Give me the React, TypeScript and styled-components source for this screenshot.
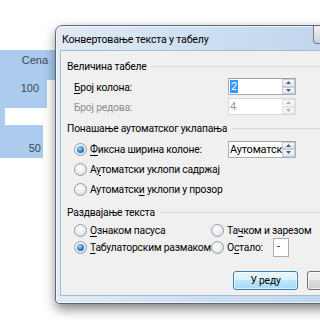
import styled, { createGlobalStyle } from 'styled-components'

const GlobalStyle = createGlobalStyle`
  html, body {
    margin: 0;
    padding: 0;
    width: 320px;
    height: 320px;
    overflow: hidden;
    background: #fff;
  }
  body {
    font-family: Roboto, "Noto Sans", sans-serif;
  }
`

const Page = styled.div`
  position: relative;
  width: 320px;
  height: 320px;
  overflow: hidden;
  background: #fff;
`

/* document behind the dialog */
const Document = styled.div`
  display: flex;
  flex-direction: column;
  padding-top: 50px;
  width: 60px;
  font-family: "Liberation Sans", Arial, sans-serif;
  font-size: 11px;
  color: #3d4650;
`

const DocRow = styled.div<{ $width: number; $height: number }>`
  display: flex;
  justify-content: flex-end;
  align-items: center;
  box-sizing: border-box;
  width: ${({ $width }) => $width}px;
  height: ${({ $height }) => $height}px;
  background: #abcbef;
`

const DocText = styled.span<{ $right: number; $dy?: number }>`
  padding-right: ${({ $right }) => $right}px;
  margin-top: ${({ $dy }) => $dy || 0}px;
`

/* dialog window */
const Window = styled.div`
  position: absolute;
  left: 55px;
  top: 25px;
  width: 331px;
  box-sizing: border-box;
  display: flex;
  flex-direction: column;
  padding: 0 4px 7px 4px;
  border: 1px solid #5b6878;
  border-radius: 7px 7px 4px 4px;
  background: linear-gradient(to right, #e1ebf6 0%, #cfe0f2 40%, #bad2ec 100%);
  box-shadow: 1px 5px 12px rgba(0, 0, 0, 0.5), inset 0 0 0 1px rgba(255, 255, 255, 0.6);
  font-size: 10.3px;
  letter-spacing: -0.2px;
`

const TitleBar = styled.div`
  position: relative;
  height: 24px;
  display: flex;
  align-items: center;
  box-sizing: border-box;
  padding: 3px 0 0 2px;
  font-size: 10.6px;
  color: #000;
`

const CloseButton = styled.div`
  position: absolute;
  left: 253px;
  top: 0;
  width: 43px;
  height: 18px;
  box-sizing: border-box;
  border: 1px solid #6f7d8d;
  border-top: none;
  border-radius: 0 0 4px 4px;
  background: linear-gradient(#edf1f6, #c9d3de);
`

const Client = styled.div`
  display: flex;
  flex-direction: column;
  padding: 5px 7px 5px 6px;
  border: 1px solid #a7bbd2;
  background: #f0f0f0;
  color: #000;
`

const Header = styled.div<{ $top?: number }>`
  display: flex;
  align-items: center;
  gap: 5px;
  height: 20px;
  margin-top: ${({ $top }) => $top || 0}px;
  white-space: nowrap;
`

const HeaderLine = styled.div`
  flex: 1;
  height: 1px;
  background: #d5dbe2;
`

const FieldRow = styled.div<{ $top?: number }>`
  display: flex;
  align-items: flex-start;
  height: 20px;
  margin-top: ${({ $top }) => $top || 0}px;
  padding-left: 7px;
`

const FieldLabel = styled.div<{ $disabled?: boolean }>`
  width: 154px;
  line-height: 20px;
  white-space: nowrap;
  color: ${({ $disabled }) => ($disabled ? '#8d8d8d' : '#000')};
`

const Key = styled.span`
  text-decoration: underline;
  text-underline-offset: 2px;
`

const SpinBox = styled.div<{ $disabled?: boolean }>`
  display: flex;
  flex: none;
  width: 68px;
  height: 17px;
  box-sizing: border-box;
  border: 1px solid ${({ $disabled }) => ($disabled ? '#d9d9d9' : '#abadb3')};
  border-top-color: ${({ $disabled }) => ($disabled ? '#d9d9d9' : '#9da2aa')};
  background: #fff;
  overflow: hidden;
`

const SpinValue = styled.div<{ $disabled?: boolean }>`
  flex: 1;
  overflow: hidden;
  white-space: nowrap;
  padding-left: 1px;
  line-height: 15px;
  font-size: 11px;
  color: ${({ $disabled }) => ($disabled ? '#9a9a9a' : '#000')};
`

const Selected = styled.span`
  background: #3399ff;
  color: #fff;
  padding: 0 1px;
`

const SpinButtons = styled.div`
  display: flex;
  flex-direction: column;
  width: 13px;
`

const SpinHalf = styled.div<{ $disabled?: boolean }>`
  flex: 1;
  display: flex;
  align-items: center;
  justify-content: center;
  box-sizing: border-box;
  border: 1px solid ${({ $disabled }) => ($disabled ? '#e3e3e3' : '#c9ced6')};
  background: ${({ $disabled }) =>
    $disabled ? '#f4f4f4' : 'linear-gradient(#f6f7f9, #e1e5ea)'};
`

const RadioRow = styled.div<{ $top?: number }>`
  display: flex;
  align-items: center;
  height: 20px;
  margin-top: ${({ $top }) => $top || 0}px;
  padding-left: 7px;
`

const RadioGrid = styled.div`
  display: grid;
  grid-template-columns: 137px 1fr;
  grid-auto-rows: 17px;
  padding-left: 7px;
`

const RadioItem = styled.div<{ $width?: number }>`
  display: flex;
  align-items: center;
  flex: none;
  width: ${({ $width }) => ($width ? `${$width}px` : 'auto')};
  white-space: nowrap;
`

const RadioLabel = styled.span<{ $width?: number }>`
  flex: none;
  width: ${({ $width }) => ($width ? `${$width}px` : 'auto')};
  white-space: nowrap;
`

const Radio = styled.div<{ $checked?: boolean }>`
  position: relative;
  flex: none;
  width: 13px;
  height: 13px;
  margin-right: 3px;
  box-sizing: border-box;
  border-radius: 50%;
  border: 1px solid #979ca3;
  background: radial-gradient(circle at 40% 35%, #ffffff 0%, #e9ebee 55%, #cfd3d8 100%);
  &::after {
    content: '';
    display: ${({ $checked }) => ($checked ? 'block' : 'none')};
    position: absolute;
    left: 2px;
    top: 2px;
    width: 7px;
    height: 7px;
    border-radius: 50%;
    background: radial-gradient(circle at 40% 35%, #a9dcff 0%, #2f84d0 50%, #17456e 100%);
  }
`

const SmallEdit = styled.div`
  flex: none;
  width: 16px;
  height: 19px;
  box-sizing: border-box;
  border: 1px solid #abadb3;
  background: #fff;
  line-height: 16px;
  padding-left: 3px;
`

const Buttons = styled.div`
  display: flex;
  gap: 9px;
  margin-top: 15px;
  padding-left: 166px;
`

const Button = styled.div<{ $default?: boolean }>`
  width: 65px;
  height: 19px;
  flex: none;
  box-sizing: border-box;
  display: flex;
  align-items: center;
  justify-content: center;
  border-radius: 3px;
  border: 1px solid ${({ $default }) => ($default ? '#3c7fb1' : '#707070')};
  background: ${({ $default }) =>
    $default
      ? 'linear-gradient(#eaf6fd 0%, #d9f0fc 45%, #bee6fd 50%, #a7d9f5 100%)'
      : 'linear-gradient(#f2f2f2 0%, #ebebeb 45%, #dddddd 50%, #cfcfcf 100%)'};
  box-shadow: inset 0 0 0 1px rgba(255, 255, 255, 0.6);
`

const Arrow = ({ up, disabled }: { up?: boolean; disabled?: boolean }) => (
  <svg width="5" height="3" viewBox="0 0 5 3">
    <path
      d={up ? 'M0 3 L2.5 0 L5 3 Z' : 'M0 0 L5 0 L2.5 3 Z'}
      fill={disabled ? '#b5b5b5' : '#4a5e7e'}
    />
  </svg>
)

const Spin = ({
  value,
  disabled,
}: {
  value: React.ReactNode
  disabled?: boolean
}) => (
  <SpinBox $disabled={disabled}>
    <SpinValue $disabled={disabled}>{value}</SpinValue>
    <SpinButtons>
      <SpinHalf $disabled={disabled}>
        <Arrow up disabled={disabled} />
      </SpinHalf>
      <SpinHalf $disabled={disabled}>
        <Arrow disabled={disabled} />
      </SpinHalf>
    </SpinButtons>
  </SpinBox>
)

const App = () => (
  <Page>
    <GlobalStyle />
    <Document>
      <DocRow $width={55} $height={30}>
        <DocText $right={7} $dy={-10}>Cena</DocText>
      </DocRow>
      <DocRow $width={47} $height={28}>
        <DocText $right={8} $dy={-12}>100</DocText>
      </DocRow>
      <DocRow $width={5} $height={17} />
      <DocRow $width={43} $height={33}>
        <DocText $right={2} $dy={13}>50</DocText>
      </DocRow>
    </Document>

    <Window>
      <TitleBar>
        Конвертовање текста у табелу
        <CloseButton />
      </TitleBar>
      <Client>
        <Header>
          Величина табеле
          <HeaderLine />
        </Header>
        <FieldRow $top={2}>
          <FieldLabel>
            <Key>Б</Key>рој колона:
          </FieldLabel>
          <Spin value={<Selected>2</Selected>} />
        </FieldRow>
        <FieldRow>
          <FieldLabel $disabled>Број редова:</FieldLabel>
          <Spin value="4" disabled />
        </FieldRow>
        <Header>
          Понашање аутоматског уклапања
          <HeaderLine />
        </Header>
        <RadioRow $top={1}>
          <RadioItem $width={154}>
            <Radio $checked />
            <RadioLabel>
              <Key>Ф</Key>иксна ширина колоне:
            </RadioLabel>
          </RadioItem>
          <Spin value="Аутоматски" />
        </RadioRow>
        <RadioRow>
          <RadioItem>
            <Radio />
            <RadioLabel>
              А<Key>у</Key>томатски уклопи садржај
            </RadioLabel>
          </RadioItem>
        </RadioRow>
        <RadioRow>
          <RadioItem>
            <Radio />
            <RadioLabel>
              Аутоматск<Key>и</Key> уклопи у прозор
            </RadioLabel>
          </RadioItem>
        </RadioRow>
        <Header $top={3}>
          Раздвајање текста
          <HeaderLine />
        </Header>
        <RadioGrid>
          <RadioItem>
            <Radio />
            <RadioLabel>
              <Key>О</Key>знаком пасуса
            </RadioLabel>
          </RadioItem>
          <RadioItem>
            <Radio />
            <RadioLabel>
              Та<Key>ч</Key>ком и зарезом
            </RadioLabel>
          </RadioItem>
          <RadioItem>
            <Radio $checked />
            <RadioLabel>
              <Key>Т</Key>абулаторским размаком
            </RadioLabel>
          </RadioItem>
          <RadioItem>
            <Radio />
            <RadioLabel $width={46}>
              О<Key>с</Key>тало:
            </RadioLabel>
            <SmallEdit>-</SmallEdit>
          </RadioItem>
        </RadioGrid>
        <Buttons>
          <Button $default>У реду</Button>
          <Button>Откажи</Button>
        </Buttons>
      </Client>
    </Window>
  </Page>
)

export default App
